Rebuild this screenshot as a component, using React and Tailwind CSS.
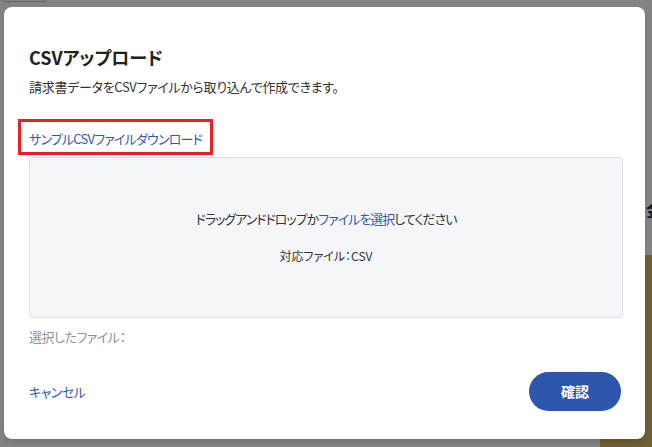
import React from 'react';

const App = () => {
    return (
        <div className="relative h-[447px] w-[652px] overflow-hidden bg-white font-['Noto_Sans_CJK_JP','Noto_Sans',sans-serif] [font-feature-settings:'palt']">
            {/* page behind the overlay */}
            <div className="absolute left-[600px] top-[255px] h-[300px] w-[200px] rounded-tl-[45px] bg-[#d9b65a]" />
            <div className="absolute left-[646px] top-[196px] text-[18px] font-bold text-[#1f2a44]">金</div>
            <div className="absolute left-0 top-[-6px] h-[8px] w-[48px] rounded border border-[#bbb] bg-white" />

            {/* overlay */}
            <div className="absolute inset-0 bg-[#05080c]/50" />

            <div className="relative flex pl-[4px] pt-[7px]">
                <div className="flex h-[432px] w-[641px] flex-col rounded-lg bg-white pl-[25px] pr-[22px] pt-[36px] shadow-md">
                    <h2 className="text-[18px] font-bold leading-[28px] text-[#222]">CSVアップロード</h2>
                    <p className="mt-[6px] text-[13px] leading-[20px] tracking-[-0.3px] text-[#333]">
                        請求書データをCSVファイルから取り込んで作成できます。
                    </p>

                    <div className="ml-[-11px] mt-[22px] w-fit border-[3px] border-[#e8202a] px-[8px] py-[3px]">
                        <a href="#" className="text-[13px] leading-[20px] tracking-[-0.8px] text-[#3558b3]">サンプルCSVファイルダウンロード</a>
                    </div>

                    <div className="mt-[2px] flex h-[161px] flex-col items-center justify-center rounded border border-[#dde0e8] bg-[#f5f6fa]">
                        <p className="text-[13px] leading-[20px] tracking-[-1px] text-[#333]">
                            ドラッグアンドドロップか<span className="text-[#3558b3]">ファイルを選択</span>してください
                        </p>
                        <p className="mt-[17px] text-[12px] leading-[20px] text-[#333]">対応ファイル：CSV</p>
                    </div>

                    <p className="mt-[9px] text-[13px] leading-[20px] tracking-[-0.5px] text-[#8c919b]">選択したファイル：</p>

                    <div className="mt-[25px] flex items-center justify-between">
                        <a href="#" className="text-[13px] leading-[20px] tracking-[-0.5px] text-[#3558b3]">キャンセル</a>
                        <button className="mr-[2px] h-[39px] w-[92px] rounded-full bg-[#2d56ad] text-[14px] font-bold text-white">
                            確認
                        </button>
                    </div>
                </div>
            </div>
        </div>
    );
};

export default App;
